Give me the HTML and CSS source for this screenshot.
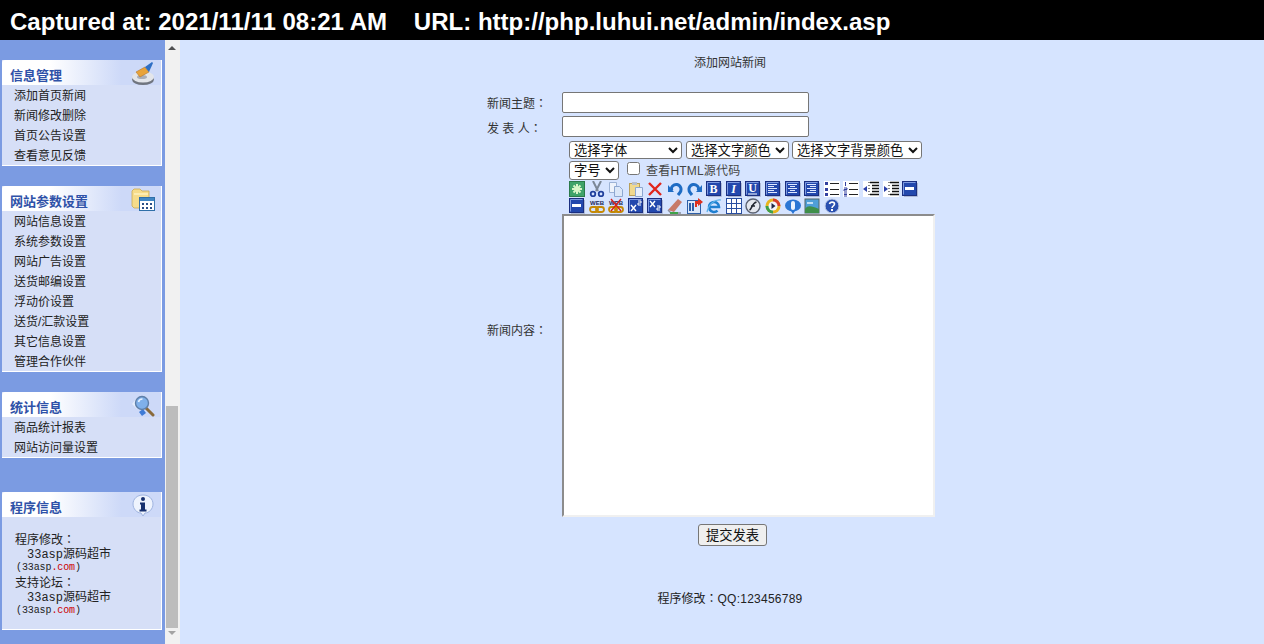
FILE: index.html
```html
<!DOCTYPE html>
<html lang="zh">

<head>
  <meta charset="utf-8">
  <title>添加网站新闻</title>
  <link rel="stylesheet" href="styles.css">
</head>

<body>
  <svg class="defs" width="0" height="0">
    <symbol id="btn" viewBox="0 0 16 16">
      <rect x="0.5" y="0.5" width="14" height="14" fill="#2348ad" stroke="#1b2f80"/>
      <path d="M15.500 2v13.500H2" fill="none" stroke="#aeb9d6"/>
      <path d="M1.500 13.500v-12h12" fill="none" stroke="#7f9be0"/>
    </symbol>
    <symbol id="minus" viewBox="0 0 16 16">
      <use href="#btn"/>
      <rect x="3" y="6" width="9" height="3" fill="#fff"/>
    </symbol>
    <symbol id="chain" viewBox="0 0 16 16">
      <text x="8" y="6.500" class="web">WEB</text>
      <g fill="none" stroke="#c58a06" stroke-width="1.800">
        <rect x="1" y="9" width="8" height="5" rx="2.500"/>
        <rect x="7" y="9" width="8" height="5" rx="2.500"/>
      </g>
    </symbol>
  </svg>

  <div class="capture-bar">Captured at: 2021/11/11 08:21 AM &nbsp;&nbsp; URL: http://php.luhui.net/admin/index.asp</div>

  <div class="frames">
    <div class="side">
      <div class="menu">
        <div class="menu-head">
          <span>信息管理</span>
          <svg class="menu-icon" viewBox="0 0 24 24">
            <ellipse cx="12" cy="17.500" rx="11" ry="5.500" fill="#70757f"/>
            <ellipse cx="12" cy="15" rx="11" ry="5.500" fill="#e3e5ea"/>
            <ellipse cx="11" cy="15" rx="5" ry="2" fill="#a9aeb9"/>
            <path d="M5 10l9-5 4 5-9 5z" fill="#e8a33a" stroke="#b5762a" stroke-width=".6"/>
            <path d="M14 5l7-5 1 1-4 9z" fill="#2f6fc4"/>
          </svg>
        </div>
        <a class="menu-item">添加首页新闻</a>
        <a class="menu-item">新闻修改删除</a>
        <a class="menu-item">首页公告设置</a>
        <a class="menu-item">查看意见反馈</a>
      </div>

      <div class="menu">
        <div class="menu-head">
          <span>网站参数设置</span>
          <svg class="menu-icon" viewBox="0 0 24 24">
            <path d="M1 3l2-2h6l2 2h7v17H3l-2-2z" fill="#f6dc8a" stroke="#c9a850" stroke-width=".8"/>
            <path d="M3 6h14" stroke="#fff3c2" stroke-width="1.400"/>
            <rect x="8.500" y="9.500" width="15" height="13" fill="#fff" stroke="#2f6fa8"/>
            <rect x="9" y="10" width="14" height="3" fill="#3f86c4"/>
            <path d="M11 15h2v2h-2zM15 15h2v2h-2zM19 15h2v2h-2zM11 19h2v2h-2zM15 19h2v2h-2zM19 19h2v2h-2z" fill="#2b4f86"/>
          </svg>
        </div>
        <a class="menu-item">网站信息设置</a>
        <a class="menu-item">系统参数设置</a>
        <a class="menu-item">网站广告设置</a>
        <a class="menu-item">送货邮编设置</a>
        <a class="menu-item">浮动价设置</a>
        <a class="menu-item">送货/汇款设置</a>
        <a class="menu-item">其它信息设置</a>
        <a class="menu-item">管理合作伙伴</a>
      </div>

      <div class="menu">
        <div class="menu-head">
          <span>统计信息</span>
          <svg class="menu-icon" viewBox="0 0 24 24">
            <path d="M1 10l6-7 3 5-4 7z" fill="#e6eefc"/>
            <path d="M8 18l4-3 3 4-4 3z" fill="#3f7bd6"/>
            <path d="M15 14l7 7" stroke="#8a6a3a" stroke-width="3" stroke-linecap="round"/>
            <circle cx="11" cy="9" r="6.500" fill="#7fb0ea" stroke="#5f7fa8" stroke-width="1.400"/>
            <path d="M7.500 8a4 4 0 0 1 4-3" stroke="#e8f2ff" stroke-width="1.600" fill="none"/>
          </svg>
        </div>
        <a class="menu-item">商品统计报表</a>
        <a class="menu-item">网站访问量设置</a>
      </div>

      <div class="menu">
        <div class="menu-head">
          <span>程序信息</span>
          <svg class="menu-icon" viewBox="0 0 24 24">
            <path d="M12 1c6 0 10 4 10 9s-4 9-8 9l-2 3-2-3c-4 0-8-4-8-9s4-9 10-9z" fill="#eef3fd" stroke="#9fb4e0"/>
            <circle cx="12" cy="5" r="2" fill="#16306f"/>
            <path d="M9 8.500h5v7h1.500v2h-7v-2H10v-5H9z" fill="#16306f"/>
          </svg>
        </div>
        <div class="info-body">
          <div>程序修改<span class="colon" lang="zh-Hant">：</span></div>
          <div class="info-name">33asp源码超市</div>
          <div class="info-link">(33asp<i>.com</i>)</div>
          <div>支持论坛<span class="colon" lang="zh-Hant">：</span></div>
          <div class="info-name">33asp源码超市</div>
          <div class="info-link">(33asp<i>.com</i>)</div>
        </div>
      </div>
    </div>

    <div class="scroll">
      <div class="arrow-up"></div>
      <div class="thumb"></div>
      <div class="arrow-down"></div>
    </div>

    <div class="main">
      <div class="page-title">添加网站新闻</div>

      <form class="news-form">
        <label class="lab">新闻主题<span class="colon" lang="zh-Hant">：</span></label>
        <input class="txt" type="text">

        <label class="lab lab-low">发 表 人<span class="colon" lang="zh-Hant">：</span></label>
        <input class="txt" type="text">

        <label class="lab lab-low">新闻内容<span class="colon" lang="zh-Hant">：</span></label>
        <div class="editor">
          <div class="sel-row">
            <select class="sel-font"><option>选择字体</option></select>
            <select class="sel-color"><option>选择文字颜色</option></select>
            <select class="sel-back"><option>选择文字背景颜色</option></select>
          </div>
          <div class="sel-row sel-row-2">
            <select class="sel-size"><option>字号</option></select>
            <input class="src-check" type="checkbox">
            <span class="src-text">查看HTML源代码</span>
          </div>
          <div class="tools">
            <svg class="tool" viewBox="0 0 16 16"><rect x=".5" y=".5" width="15" height="15" fill="#3fa36a" stroke="#2b7a4a"/><path d="M8 3v10M3 8h10M4.500 4.500l7 7M11.500 4.500l-7 7" stroke="#d8f5c8" stroke-width="2"/></svg>
            <svg class="tool" viewBox="0 0 16 16"><path d="M4 0l5 10M12 0L7 10" stroke="#7c8796" stroke-width="2"/><circle cx="4" cy="13" r="2.300" fill="none" stroke="#1f3f9c" stroke-width="1.800"/><circle cx="12" cy="13" r="2.300" fill="none" stroke="#1f3f9c" stroke-width="1.800"/></svg>
            <svg class="tool" viewBox="0 0 16 16"><path d="M1.500 1.500h7v10h-7z" fill="#eef3fb" stroke="#9db3d6"/><path d="M6.500 5.500h5l3 3v7h-8z" fill="#dbe7f8" stroke="#8da7d0"/></svg>
            <svg class="tool" viewBox="0 0 16 16"><rect x="1.500" y="2.500" width="10" height="12" fill="#f0d98e" stroke="#b9a05a"/><rect x="4" y="1" width="5" height="3" fill="#b9c0cc"/><path d="M7.500 6.500h7v9h-7z" fill="#e8f0fb" stroke="#8da7d0"/></svg>
            <svg class="tool" viewBox="0 0 16 16"><path d="M2 2l12 12M14 2L2 14" stroke="#e0261c" stroke-width="2.400"/></svg>
            <svg class="tool" viewBox="0 0 16 16"><path d="M5 9.500C3 6 7 3 10 3.500c4 .8 5 5 3 8l-2 2.500" fill="none" stroke="#1f6cc4" stroke-width="3"/><path d="M1 4l6 7H1z" fill="#1f6cc4"/></svg>
            <svg class="tool" viewBox="0 0 16 16"><path d="M11 9.500C13 6 9 3 6 3.500c-4 .8-5 5-3 8l2 2.500" fill="none" stroke="#1f6cc4" stroke-width="3"/><path d="M15 4l-6 7h6z" fill="#1f6cc4"/></svg>
            <svg class="tool" viewBox="0 0 16 16"><use href="#btn"/><text x="7.500" y="12" class="glyph">B</text></svg>
            <svg class="tool" viewBox="0 0 16 16"><use href="#btn"/><text x="7.500" y="12" class="glyph glyph-i">I</text></svg>
            <svg class="tool" viewBox="0 0 16 16"><use href="#btn"/><text x="7.500" y="11" class="glyph">U</text><path d="M3 13h9" stroke="#fff"/></svg>
            <svg class="tool" viewBox="0 0 16 16"><use href="#btn"/><path d="M3 3.500h9M3 5.500h6M3 7.500h9M3 9.500h6M3 11.500h9" stroke="#dfe8ff"/></svg>
            <svg class="tool" viewBox="0 0 16 16"><use href="#btn"/><path d="M3 3.500h9M5 5.500h5M3 7.500h9M5 9.500h5M3 11.500h9" stroke="#dfe8ff"/></svg>
            <svg class="tool" viewBox="0 0 16 16"><use href="#btn"/><path d="M3 3.500h9M6 5.500h6M3 7.500h9M6 9.500h6M3 11.500h9" stroke="#dfe8ff"/></svg>
            <svg class="tool" viewBox="0 0 16 16"><rect width="16" height="16" fill="#fff"/><path d="M1 1h3v3H1zM1 7h3v3H1zM1 12h3v3H1z" fill="#3340a0"/><path d="M6 2.500h9M6 8.500h9M6 13.500h9" stroke="#222"/></svg>
            <svg class="tool" viewBox="0 0 16 16"><rect width="16" height="16" fill="#fff"/><path d="M2.500 1v4M1 7h3v1.500H1V10h3M1 12h3M1 13.500h3M1 15h3" stroke="#3340a0" fill="none"/><path d="M6 2.500h9M6 8.500h9M6 13.500h9" stroke="#222"/></svg>
            <svg class="tool" viewBox="0 0 16 16"><rect width="16" height="16" fill="#fff"/><path d="M7 1.500h9M9 4.500h7M9 7.500h7M9 10.500h7M7 13.500h9" stroke="#111" stroke-width="1.400"/><path d="M6 1v15" stroke="#111" stroke-dasharray="1 2"/><path d="M0 8l4-3v6z" fill="#2a3fa8"/></svg>
            <svg class="tool" viewBox="0 0 16 16"><rect width="16" height="16" fill="#fff"/><path d="M7 1.500h9M9 4.500h7M9 7.500h7M9 10.500h7M7 13.500h9" stroke="#111" stroke-width="1.400"/><path d="M6 1v15" stroke="#111" stroke-dasharray="1 2"/><path d="M5 8L1 5v6z" fill="#2a3fa8"/></svg>
            <svg class="tool" viewBox="0 0 16 16"><use href="#minus"/></svg>
          </div>
          <div class="tools tools-last">
            <svg class="tool" viewBox="0 0 16 16"><use href="#minus"/></svg>
            <svg class="tool" viewBox="0 0 16 16"><use href="#chain"/></svg>
            <svg class="tool" viewBox="0 0 16 16"><use href="#chain"/><path d="M3 1l10 12M13 1L3 13" stroke="#d8201a" stroke-width="1.400"/></svg>
            <svg class="tool" viewBox="0 0 16 16"><use href="#btn"/><path d="M3 7l5 6M8 7l-5 6" stroke="#fff" stroke-width="1.400"/><path d="M10 3h3v2h-3v2h3" fill="none" stroke="#fff"/></svg>
            <svg class="tool" viewBox="0 0 16 16"><use href="#btn"/><path d="M3 3l5 6M8 3L3 9" stroke="#fff" stroke-width="1.400"/><path d="M10 8h3v2h-3v2h3" fill="none" stroke="#fff"/></svg>
            <svg class="tool" viewBox="0 0 16 16"><path d="M1 12L11 1l4 3-8 10z" fill="#c77a6a"/><path d="M1 12l3 3h10" stroke="#8a8f9c" stroke-width="1.400" fill="none"/><path d="M3 15h8" stroke="#3fa34a" stroke-width="2"/></svg>
            <svg class="tool" viewBox="0 0 16 16"><rect x=".5" y="2.500" width="13" height="13" fill="#dbe7f8" stroke="#2e5fa8"/><path d="M3 5v8M6 5v8" stroke="#2e5fa8" stroke-width="2"/><path d="M8 9V3h3V0l5 4-5 4V6H10v3z" fill="#e0301e"/></svg>
            <svg class="tool" viewBox="0 0 16 16"><path d="M2.500 9h10.500a5 5 0 1 0-1.500 3.600" fill="none" stroke="#1f7fd0" stroke-width="2.600"/><path d="M1 14C3 5 10 1 15 2" fill="none" stroke="#5db2e8" stroke-width="1.200"/></svg>
            <svg class="tool" viewBox="0 0 16 16"><rect x=".5" y=".5" width="15" height="15" fill="#fff" stroke="#2a4fa0"/><path d="M5.500 1v14M10.500 1v14M1 5.500h14M1 10.500h14" stroke="#2a4fa0"/></svg>
            <svg class="tool" viewBox="0 0 16 16"><circle cx="8" cy="8" r="7" fill="#e4e7ee" stroke="#5a6170" stroke-width="1.400"/><path d="M4.500 12C7 11 7 5 11.500 4M6 8h4" fill="none" stroke="#20242e" stroke-width="1.600"/></svg>
            <svg class="tool" viewBox="0 0 16 16"><circle cx="8" cy="8" r="7.500" fill="#e9b520"/><path d="M8 .5a7.500 7.500 0 0 1 7.500 7.500H8z" fill="#d8402a"/><path d="M8 15.500A7.500 7.500 0 0 1 .5 8H8z" fill="#3f9f4a"/><circle cx="8" cy="8" r="4.500" fill="#f4f6fa"/><path d="M6.500 5l4 3-4 3z" fill="#222a44"/></svg>
            <svg class="tool" viewBox="0 0 16 16"><ellipse cx="8" cy="7.500" rx="8" ry="6" fill="#2a76d4"/><path d="M6 13h4l-2 3z" fill="#2a76d4"/><rect x="6" y="3" width="4" height="9" rx="2" fill="#eaf3ff"/></svg>
            <svg class="tool" viewBox="0 0 16 16"><rect x="1" y="1" width="14" height="14" fill="#4f9fd8" stroke="#566"/><path d="M1 11c3-4 6-3 14 0v4H1z" fill="#3f8f4a"/><path d="M3 5h6" stroke="#e8f5ff" stroke-width="1.500"/></svg>
            <svg class="tool" viewBox="0 0 16 16"><circle cx="8" cy="8" r="7" fill="#2a50b0" stroke="#c4cfe8"/><path d="M5.500 6C6 3.500 10.500 3.500 10.500 6c0 2-2.500 2-2.500 4" fill="none" stroke="#fff" stroke-width="1.600"/><rect x="7" y="11" width="2" height="2" fill="#fff"/></svg>
          </div>
          <textarea class="content"></textarea>
        </div>

        <div class="submit-row"><button type="button" class="submit">提交发表</button></div>
      </form>

      <div class="page-foot">程序修改<span class="colon" lang="zh-Hant">：</span><span class="qq">QQ:123456789</span></div>
    </div>
  </div>
</body>

</html>
```

FILE: styles.css
```css
body {
  margin: 0;
  height: 644px;
  overflow: hidden;
  font-family: "Liberation Sans", "Noto Sans CJK SC", sans-serif;
  font-size: 12px;
  color: #333;
  background-color: #d6e4ff;
}

.defs {
  display: block;
  height: 0;
}

.web {
  font: bold 6px "Liberation Sans", sans-serif;
  fill: #1a2a5c;
  text-anchor: middle;
}

.colon {
  font-family: "Noto Sans CJK TC", sans-serif;
}

.capture-bar {
  height: 40px;
  box-sizing: border-box;
  padding: 4px 0 0 10px;
  line-height: 36px;
  background: #000;
  color: #fff;
  font-size: 24.04px;
  font-weight: bold;
  white-space: nowrap;
}

.frames {
  display: flex;
  height: 604px;
}

/* left menu frame */
.side {
  width: 165px;
  padding-top: 20px;
  box-sizing: border-box;
  background: #7b9be2;
}

.menu {
  width: 160px;
  margin: 0 0 20px 2px;
  background: #d6dff7;
  border-right: 1px solid #fff;
  border-bottom: 1px solid #fff;
  box-sizing: border-box;
}

.menu:nth-child(3) {
  margin-bottom: 34px;
}

.menu-head {
  display: flex;
  justify-content: space-between;
  height: 25px;
  padding-left: 8px;
  border-radius: 3px 3px 0 0;
  background: linear-gradient(90deg, #fff 30%, #cdd9f8 75%);
  color: #2f52a8;
  font-size: 13px;
  font-weight: bold;
}

.menu-head span {
  padding-top: 5px;
}

.menu-icon {
  width: 24px;
  height: 24px;
  margin: 2px 6px 0 0;
}

.menu-item {
  display: block;
  height: 20px;
  line-height: 22px;
  padding-left: 12px;
  color: #222;
}

.info-body {
  height: 112px;
  padding: 15px 0 0 13px;
  box-sizing: border-box;
  color: #222;
  line-height: 14px;
}

.info-name {
  padding: 1px 0 0 12px;
  margin-bottom: -1px;
  font-family: "Liberation Mono", "Noto Sans CJK SC", monospace;
}

.info-link {
  margin-left: 1px;
  font-family: "Liberation Mono", monospace;
  font-size: 10px;
  letter-spacing: -.1px;
}

.info-link i {
  font-style: normal;
  color: #c00;
}

/* scrollbar of the menu frame */
.scroll {
  width: 15px;
  background: #f1f1f1;
}

.arrow-up,
.arrow-down {
  width: 0;
  margin-left: 3px;
  border-left: 4px solid transparent;
  border-right: 4px solid transparent;
}

.arrow-up {
  margin-top: 6px;
  border-bottom: 4px solid #505050;
}

.arrow-down {
  margin-top: 3px;
  border-top: 4px solid #a3a3a3;
}

.thumb {
  width: 12px;
  height: 222px;
  margin: 356px 0 0 1px;
  background: #bcbcbc;
}

/* main frame */
.main {
  flex: 1;
  padding-top: 16px;
}

.page-title {
  height: 36px;
  padding-left: 16px;
  text-align: center;
  line-height: 14px;
}

.news-form {
  display: grid;
  grid-template-columns: 75px 373px;
  row-gap: 3px;
  align-items: center;
  margin-left: 307px;
}

.lab {
  color: #333;
}

.lab-low {
  padding-top: 2px;
}

.txt {
  width: 247px;
  height: 21px;
  box-sizing: border-box;
  margin: 0;
  border: 1px solid #767676;
  border-radius: 2px;
  background: #fff;
}

.editor {
  padding-top: 1px;
}

.sel-row {
  display: flex;
  align-items: center;
  padding-left: 7px;
  margin-bottom: 2px;
}

.sel-row-2 {
  margin-bottom: 1px;
}

select {
  margin: 0;
  height: 18px;
  padding: 0 0 1px;
  font-family: "Liberation Sans", "Noto Sans CJK SC", sans-serif;
  font-size: 13.3px;
  background: #fff;
  color: #111;
  border: 1px solid #767676;
  border-radius: 3px;
}

.sel-font {
  width: 113px;
  margin-right: 4px;
}

.sel-color {
  width: 103px;
  margin-right: 3px;
}

.sel-back {
  width: 130px;
}

.sel-size {
  width: 50px;
  height: 19px;
}

.src-check {
  width: 13px;
  height: 13px;
  margin: 0 6px 4px 8px;
}

.src-text {
  padding-bottom: 2px;
  color: #444;
  letter-spacing: .2px;
}

.tools {
  display: flex;
  gap: 3.6px;
  height: 17px;
  padding-left: 7px;
}

.tools-last {
  height: 16px;
}

.tool {
  width: 16px;
  height: 16px;
  flex: none;
}

.glyph {
  font: bold 12px "Liberation Serif", serif;
  fill: #fff;
  text-anchor: middle;
}

.glyph-i {
  font-style: italic;
}

.content {
  display: block;
  width: 373px;
  height: 303px;
  box-sizing: border-box;
  margin: 0;
  padding: 0;
  resize: none;
  background: #fff;
  border: 2px solid;
  border-color: #8c8c8c #f0f0f0 #f0f0f0 #8c8c8c;
}

.submit-row {
  grid-column: 1 / 3;
  padding: 4px 0 0 211px;
}

.submit {
  width: 69px;
  height: 22px;
  margin: 0;
  padding: 0 0 2px;
  background: #efefef;
  border: 1px solid #767676;
  border-radius: 3px;
  color: #111;
  font-family: "Liberation Sans", "Noto Sans CJK SC", sans-serif;
  font-size: 13.3px;
}

.page-foot {
  margin-top: 43px;
  padding-left: 16px;
  text-align: center;
  color: #222;
}

.qq {
  letter-spacing: .25px;
}
```
